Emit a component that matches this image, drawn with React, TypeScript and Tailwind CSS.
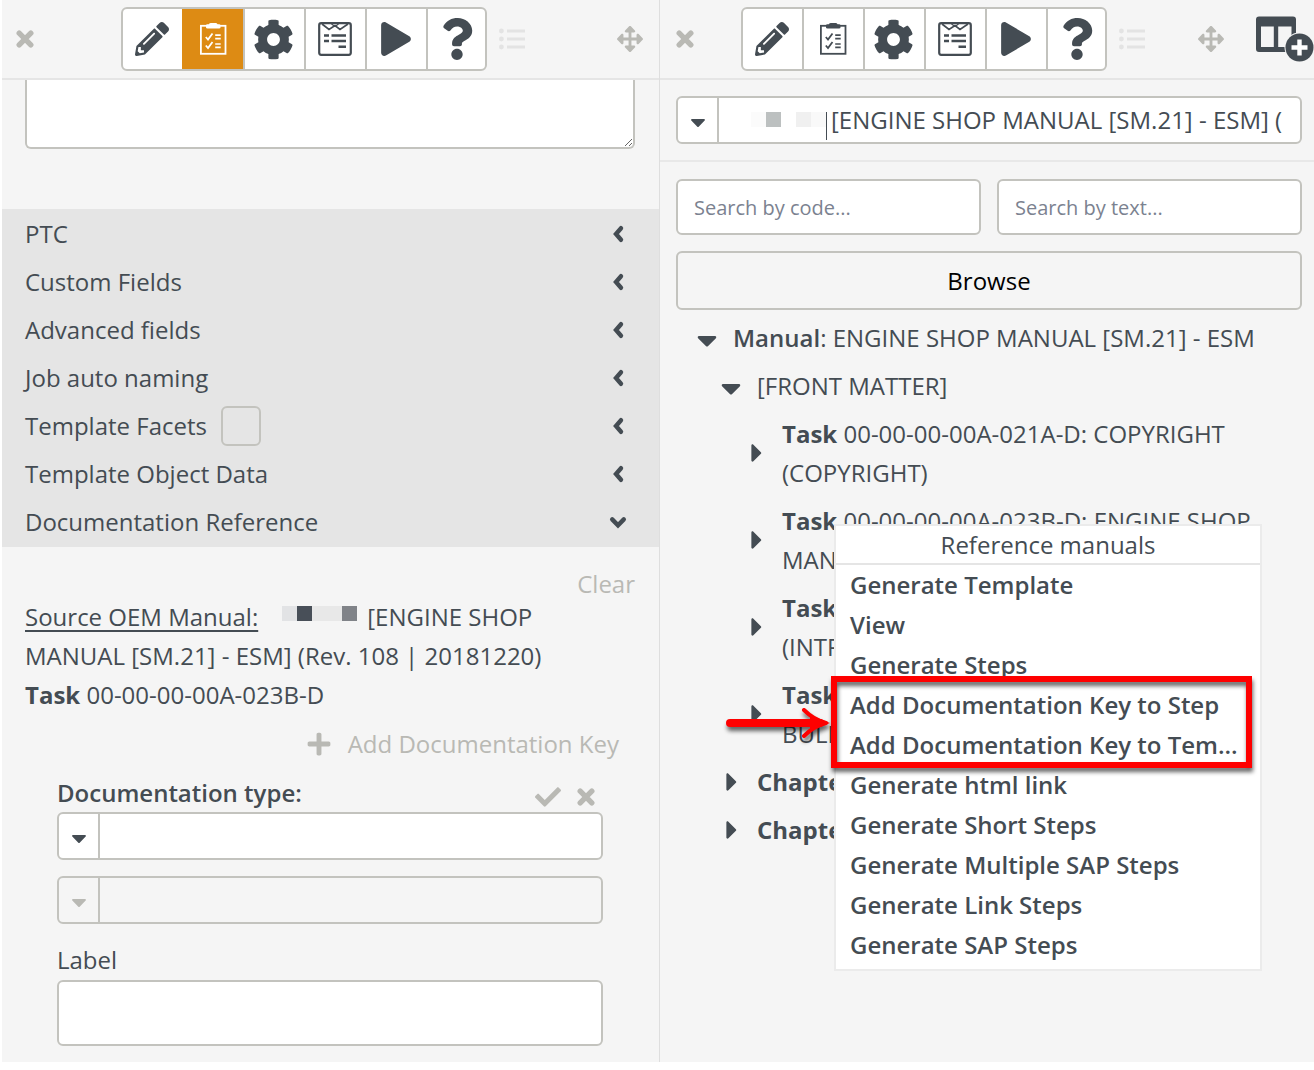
import { useState, type ReactNode } from "react";
import {
  FaArrowsAlt,
  FaCaretDown,
  FaCaretRight,
  FaCheck,
  FaCog,
  FaPencilAlt,
  FaPlay,
  FaPlus,
  FaQuestion,
} from "react-icons/fa";

type Tool = "edit" | "checklist" | "settings" | "form" | "run" | "help";

const TOOLS: { id: Tool; label: string; icon: ReactNode }[] = [
  { id: "edit", label: "Edit", icon: <FaPencilAlt className="size-[34px]" /> },
  { id: "checklist", label: "Checklist", icon: <ClipboardIcon /> },
  { id: "settings", label: "Settings", icon: <FaCog className="size-[41px]" /> },
  { id: "form", label: "Form", icon: <FormIcon /> },
  { id: "run", label: "Run", icon: <FaPlay className="size-[34px]" /> },
  { id: "help", label: "Help", icon: <FaQuestion className="size-[42px]" /> },
];

const SECTIONS = [
  { title: "PTC" },
  { title: "Custom Fields" },
  { title: "Advanced fields" },
  { title: "Job auto naming" },
  { title: "Template Facets", checkbox: true },
  { title: "Template Object Data" },
  { title: "Documentation Reference", open: true },
];

const TASKS = [
  { code: "00-00-00-00A-021A-D: COPYRIGHT", detail: "(COPYRIGHT)" },
  { code: "00-00-00-00A-023B-D: ENGINE SHOP", detail: "MANUAL" },
  { code: "", detail: "(INTR" },
  { code: "", detail: "BULL" },
];

const MENU_ITEMS = [
  "Generate Template",
  "View",
  "Generate Steps",
  "Add Documentation Key to Step",
  "Add Documentation Key to Tem...",
  "Generate html link",
  "Generate Short Steps",
  "Generate Multiple SAP Steps",
  "Generate Link Steps",
  "Generate SAP Steps",
];

export default function App() {
  return (
    <main className="grid grid-cols-[660fr_654fr] bg-white font-['Open_Sans',sans-serif] text-2xl text-[#444c53]">
      <TemplatePanel />
      <ManualPanel />
    </main>
  );
}

/* ===== LEFT PANEL ===== */
function TemplatePanel() {
  return (
    <section className="min-w-0 border-r border-l-2 border-r-[#dedede] border-l-white bg-[#f5f5f5]">
      <header className="flex h-20 items-center border-b-2 border-[#e5e5e5] pr-4 pl-3.5">
        <CloseButton />
        <div className="ml-[87px] flex items-center gap-3">
          <Toolbar initial="checklist" />
          <ListIcon />
        </div>
        <button aria-label="Move panel" className="ml-auto text-[#b9b9b4]">
          <FaArrowsAlt className="size-[26px]" />
        </button>
      </header>

      <div className="pr-6 pl-[23px]">
        <textarea
          aria-label="Description"
          className="block h-[69px] w-full rounded-b-md border-2 border-t-0 border-[#c3c3be] bg-white"
        />
      </div>

      <div className="mt-[60px] bg-[#e5e5e5] pt-px pb-px">
        {SECTIONS.map((s) => (
          <SectionRow key={s.title} {...s} />
        ))}
      </div>

      <div className="pt-6 pr-6 pb-4 pl-[23px]">
        <button disabled className="ml-auto block leading-[26px] text-[#b9b9b4]">
          Clear
        </button>
        <p className="leading-[39px]">
          <span className="underline decoration-2 underline-offset-4">Source OEM Manual:</span>
          <span className="mr-2.5 ml-6 inline-flex h-[15px] align-[5px]">
            <i className="w-[15px] bg-[#e2e3e5]" />
            <i className="w-[15px] bg-[#484f58]" />
            <i className="w-[30px] bg-[#e8e8e8]" />
            <i className="w-[15px] bg-[#808388]" />
          </span>
          [ENGINE SHOP
          <br />
          MANUAL [SM.21] - ESM] (Rev. 108 | 20181220)
          <br />
          <b>Task</b> 00-00-00-00A-023B-D
        </p>

        <button disabled className="mt-3.5 mr-4 ml-auto flex items-center gap-4 leading-8 text-[#b9b9b4]">
          <FaPlus className="size-[26px]" />
          Add Documentation Key
        </button>

        <div className="px-8 pt-4">
          <div className="flex items-center justify-between pr-2">
            <label htmlFor="doc-type" className="leading-8 font-semibold">
              Documentation type:
            </label>
            <div className="flex items-center gap-4 pt-2 text-[#b9b9b4]">
              <button aria-label="Confirm">
                <FaCheck className="size-[26px]" />
              </button>
              <CloseButton />
            </div>
          </div>
          <div className="mt-0.5 space-y-4">
            <Combo id="doc-type" label="Show documentation types" />
            <Combo id="doc-key" label="Show documentation keys" disabled />
          </div>
          <label htmlFor="doc-label" className="mt-5 block leading-8">
            Label
          </label>
          <input
            id="doc-label"
            className="mt-1 block h-[66px] w-full rounded-md border-2 border-[#c3c3be] bg-white px-4"
          />
        </div>
      </div>
    </section>
  );
}

function SectionRow({ title, checkbox, open }: { title: string; checkbox?: boolean; open?: boolean }) {
  return (
    <div className="flex h-12 items-center pr-8 pl-[23px]">
      {checkbox ? (
        <label className="flex items-center gap-3.5">
          {title}
          <input type="checkbox" className="size-10 appearance-none rounded-md border-2 border-[#c3c3be]" />
        </label>
      ) : (
        <span>{title}</span>
      )}
      <button aria-label={`Toggle ${title}`} aria-expanded={!!open} className="ml-auto">
        <svg viewBox="0 0 18 18" className="block size-[18px]" fill="none" stroke="currentColor" strokeWidth="4.4" strokeLinecap="round">
          <path d={open ? "M3.2 6.4 L9 12.4 L14.8 6.4" : "M12 3.2 L7 9 L12 14.8"} />
        </svg>
      </button>
    </div>
  );
}

/* ===== RIGHT PANEL ===== */
function ManualPanel() {
  return (
    <section className="relative min-w-0 bg-[#f5f5f5]">
      <header className="flex h-20 items-center border-b-2 border-[#e5e5e5] pl-4">
        <CloseButton />
        <div className="ml-[47px] flex items-center gap-3">
          <Toolbar />
          <ListIcon />
        </div>
        <button aria-label="Move panel" className="ml-auto text-[#b9b9b4]">
          <FaArrowsAlt className="size-[26px]" />
        </button>
        <button aria-label="Add column" className="ml-8">
          <AddColumnIcon />
        </button>
      </header>

      <div className="border-b-2 border-[#e8e8e8] pt-4 pr-3 pb-4 pl-4">
        <Combo
          id="manual"
          label="Show manuals"
          value="[ENGINE SHOP MANUAL [SM.21] - ESM] ("
          prefix={
            <span className="flex shrink-0 pt-3.5 pl-8">
              <i className="h-[15px] w-[15px] bg-[#fbfbfb]" />
              <i className="h-[15px] w-[15px] bg-[#bcc0c0]" />
              <i className="h-[15px] w-[15px] bg-white" />
              <i className="h-[15px] w-[15px] bg-[#f0f0f0]" />
              <i className="h-[15px] w-[15px] bg-[#f9f9f9]" />
              <i className="mr-1 h-7 w-px bg-[#444c53]" />
            </span>
          }
        />
      </div>

      <div className="pt-[17px] pr-3 pl-4">
        <div className="flex gap-4">
          <SearchInput placeholder="Search by code..." />
          <SearchInput placeholder="Search by text..." />
        </div>
        <button className="mt-4 block h-[59px] w-full rounded-md border-2 border-[#c3c3be] text-black">
          Browse
        </button>
      </div>

      <ul className="mt-1 pl-[73px] leading-[39px]">
        <TreeRow open>
          <b className="font-semibold">Manual</b>: ENGINE SHOP MANUAL [SM.21] - ESM
        </TreeRow>
        <ul className="pl-6">
          <TreeRow open>[FRONT MATTER]</TreeRow>
          <ul className="pl-[25px]">
            {TASKS.map((t) => (
              <TreeRow key={t.detail}>
                <b>Task</b> {t.code}
                <br />
                {t.detail}
              </TreeRow>
            ))}
          </ul>
          <TreeRow>
            <b>Chapter</b>
          </TreeRow>
          <TreeRow>
            <b>Chapter</b>
          </TreeRow>
        </ul>
      </ul>

      <ContextMenu />
      <Callout />
    </section>
  );
}

function TreeRow({ open, children }: { open?: boolean; children: ReactNode }) {
  return (
    <li className="flex items-center pt-1 pb-[5px] whitespace-nowrap">
      <button aria-label="Toggle" aria-expanded={!!open} className="-ml-10 flex w-10 shrink-0">
        {open ? (
          <FaCaretDown className="mt-1 -ml-0.5 size-8" />
        ) : (
          <FaCaretRight className="size-[30px]" />
        )}
      </button>
      <div>{children}</div>
    </li>
  );
}

function ContextMenu() {
  return (
    <div role="menu" className="absolute top-[524px] left-[174px] w-[428px] border-2 border-[#ebebeb] bg-white">
      <div className="border-b-2 border-[#e5e5e5] text-center leading-[37px]">Reference manuals</div>
      <div className="pb-1">
        {MENU_ITEMS.map((item) => (
          <button key={item} role="menuitem" className="block h-10 w-full truncate pl-3.5 text-left font-semibold">
            {item}
          </button>
        ))}
      </div>
    </div>
  );
}

/* Red highlight around the two documentation key entries, with its arrow */
function Callout() {
  return (
    <>
      <div className="pointer-events-none absolute top-[676px] left-[171px] h-[92px] w-[421px] border-6 border-[#fe0000] drop-shadow-[1px_4px_2px_rgba(0,0,0,0.6)]" />
      <svg
        viewBox="0 0 110 40"
        className="pointer-events-none absolute top-[703px] left-[62px] h-10 w-[110px] drop-shadow-[1px_4px_2px_rgba(0,0,0,0.6)]"
        fill="none"
        stroke="#fe0000"
      >
        <path d="M8 20 H98" strokeWidth="8" strokeLinecap="round" />
        <path d="M82 7 C89 14 96 18 104 20 C96 22 89 26 82 33" strokeWidth="4" strokeLinecap="round" strokeLinejoin="round" />
        <path d="M88 12 L108 20 L88 28 Z" fill="#fe0000" stroke="none" />
      </svg>
    </>
  );
}

/* ===== SHARED ===== */
function Toolbar({ initial }: { initial?: Tool }) {
  const [active, setActive] = useState<Tool | undefined>(initial);

  return (
    <div className="flex h-16 divide-x-2 divide-[#c3c3be] overflow-hidden rounded-md border-2 border-[#c3c3be] bg-white">
      {TOOLS.map((t) => (
        <button
          key={t.id}
          aria-label={t.label}
          onClick={() => setActive(t.id)}
          className={
            t.id === active
              ? "-my-0.5 -ml-0.5 flex w-[63px] items-center justify-center bg-[#dd8b14] text-white"
              : "flex w-[61px] items-center justify-center pr-0.5 last:w-[57px] last:pr-0"
          }
        >
          {t.icon}
        </button>
      ))}
    </div>
  );
}

function Combo({
  id,
  label,
  value,
  prefix,
  disabled,
}: {
  id: string;
  label: string;
  value?: string;
  prefix?: ReactNode;
  disabled?: boolean;
}) {
  return (
    <div
      className={`flex h-12 overflow-hidden rounded-md border-2 border-[#c3c3be] ${disabled ? "bg-[#f5f5f5] text-[#b9b9b4]" : "bg-white"}`}
    >
      <button
        aria-label={label}
        disabled={disabled}
        className="flex w-[41px] shrink-0 items-center justify-center border-r-2 border-[#c3c3be] pt-1"
      >
        <FaCaretDown className="size-6" />
      </button>
      {prefix}
      <input id={id} aria-label={id} defaultValue={value} disabled={disabled} className="min-w-0 flex-1" />
    </div>
  );
}

function SearchInput({ placeholder }: { placeholder: string }) {
  return (
    <input
      aria-label={placeholder}
      placeholder={placeholder}
      className="h-14 min-w-0 flex-1 rounded-md border-2 border-[#c3c3be] bg-white px-4 text-xl placeholder:text-[#7b8290]"
    />
  );
}

function CloseButton() {
  return (
    <button aria-label="Close" className="text-[#b9b9b4]">
      <svg viewBox="0 0 18 18" className="block size-[18px]" stroke="currentColor" strokeWidth="5.4" strokeLinecap="round">
        <path d="M3.2 3.2 L14.8 14.8 M14.8 3.2 L3.2 14.8" />
      </svg>
    </button>
  );
}

function ListIcon() {
  return (
    <svg viewBox="0 0 26 22" className="block h-[22px] w-[26px] text-[#e3e3e3]" fill="currentColor">
      <circle cx="2.4" cy="3" r="2.4" />
      <circle cx="2.4" cy="11" r="2.4" />
      <circle cx="2.4" cy="19" r="2.4" />
      <path d="M8 1.5h18v3H8zM8 9.5h18v3H8zM8 17.5h18v3H8z" />
    </svg>
  );
}

function ClipboardIcon() {
  return (
    <svg viewBox="0 0 28 34" className="h-[34px] w-7" fill="none" stroke="currentColor">
      <rect x="1.9" y="3.8" width="24.6" height="28" strokeWidth="1.8" />
      <path d="M7 5.5 V3.5 Q7 2.3 8.5 2.3 H9.8 Q10.4 1 12 1 H16.5 Q18 1 18.6 2.3 H20 Q21.5 2.3 21.5 3.5 V5.5 Q21.5 6.5 20 6.5 H8.5 Q7 6.5 7 5.5 Z" fill="currentColor" stroke="none" />
      <path d="M6.8 15 L9 17.5 L13.5 11.5 M6.8 23.5 L9 26 L13.5 20" strokeWidth="1.8" />
      <path d="M16.2 13.2 h5.5 M16.2 16.6 h5.5 M16.2 22 h5.5 M16.2 25.4 h5.5" strokeWidth="1.7" />
    </svg>
  );
}

function FormIcon() {
  return (
    <svg viewBox="0 0 34 34" className="size-[34px]" fill="none" stroke="currentColor">
      <rect x="1.2" y="1.2" width="31.6" height="31.6" rx="2" strokeWidth="2.2" />
      <path d="M4 2 L11 7.5 L17 3.5 L22 7.5 L30 2" strokeWidth="1.7" />
      <path d="M13.5 2 L17 4.5 L20.5 2" strokeWidth="1.2" />
      <path d="M6 13.5 h5 M13.5 13.5 h14.5 M6 19 h5 M13.5 19 h14.5 M20.5 24.7 h7.5" strokeWidth="2.6" />
    </svg>
  );
}

function AddColumnIcon() {
  return (
    <svg viewBox="0 0 58 46" className="block h-[46px] w-[58px]">
      <path
        d="M3 0.5 H37 Q40 0.5 40 3.5 V33 Q40 36 37 36 H3 Q0 36 0 33 V3.5 Q0 0.5 3 0.5 Z M5 10.5 V31 H17.8 V10.5 Z M22.2 10.5 V31 H35.5 V10.5 Z"
        fill="currentColor"
        fillRule="evenodd"
      />
      <circle cx="43.5" cy="31.5" r="15" fill="#f5f5f5" />
      <circle cx="43.5" cy="31.5" r="14" fill="currentColor" />
      <path d="M43.5 23.5 V39.5 M35.5 31.5 H51.5" stroke="#fff" strokeWidth="4.4" />
    </svg>
  );
}
